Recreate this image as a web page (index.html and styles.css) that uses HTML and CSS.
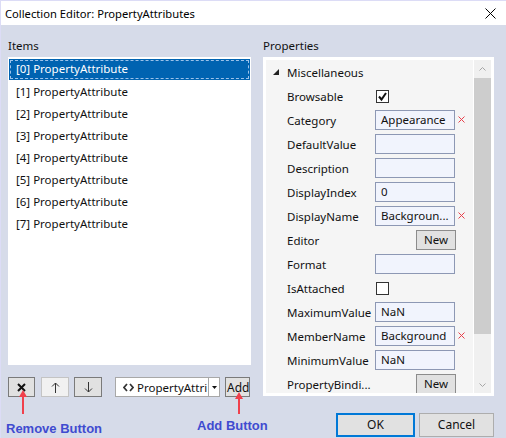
FILE: index.html
```html
<!DOCTYPE html>
<html>
<head>
<meta charset="utf-8">
<link rel="stylesheet" href="styles.css">
</head>
<body>
<div class="window">
  <div class="titlebar">
    <span class="title">Collection Editor: PropertyAttributes</span>
    <svg class="close" width="11" height="11" viewBox="0 0 11 11"><path d="M0.5 0.5 L10.5 10.5 M10.5 0.5 L0.5 10.5" stroke="#000" stroke-width="1" fill="none"/></svg>
  </div>
  <div class="main">
    <div class="col left">
      <div class="label">Items</div>
      <ul class="list">
        <li class="item selected">[0] PropertyAttribute</li>
        <li class="item">[1] PropertyAttribute</li>
        <li class="item">[2] PropertyAttribute</li>
        <li class="item">[3] PropertyAttribute</li>
        <li class="item">[4] PropertyAttribute</li>
        <li class="item">[5] PropertyAttribute</li>
        <li class="item">[6] PropertyAttribute</li>
        <li class="item">[7] PropertyAttribute</li>
      </ul>
      <div class="toolbar">
        <div class="btn tb-remove"><svg width="9" height="9" viewBox="0 0 9 9"><path d="M1 1 L8 8 M8 1 L1 8" stroke="#111" stroke-width="2" fill="none"/></svg></div>
        <div class="btn tb-up disabled"><svg width="9" height="11" viewBox="0 0 9 11"><path d="M4.5 1 L4.5 11 M1 4.5 L4.5 1 L8 4.5" stroke="#333" stroke-width="1" fill="none"/></svg></div>
        <div class="btn tb-down"><svg width="9" height="11" viewBox="0 0 9 11"><path d="M4.5 0 L4.5 10 M1 6.5 L4.5 10 L8 6.5" stroke="#333" stroke-width="1" fill="none"/></svg></div>
        <div class="combo">
          <div class="combo-value">
            <svg class="code-icon" width="11" height="9" viewBox="0 0 11 9"><path d="M4 1 L1 4.5 L4 8 M7 1 L10 4.5 L7 8" stroke="#333" stroke-width="1.7" fill="none"/></svg>
            <span class="combo-text">PropertyAttri</span>
          </div>
          <div class="combo-arrow"><svg width="5" height="3" viewBox="0 0 5 3"><path d="M0 0 L5 0 L2.5 3 Z" fill="#111"/></svg></div>
        </div>
        <div class="btn tb-add">Add</div>
      </div>
    </div>
    <div class="col right">
      <div class="label">Properties</div>
      <div class="grid">
        <div class="rows">
          <div class="row header">
            <svg class="expander" width="6" height="6" viewBox="0 0 6 6"><path d="M6 0 L6 6 L0 6 Z" fill="#222"/></svg>
            <span>Miscellaneous</span>
          </div>
          <div class="row"><span class="name">Browsable</span><span class="check checked"><svg width="11" height="11" viewBox="0 0 11 11"><path d="M2 5.5 L4.5 8.5 L9 2" stroke="#111" stroke-width="2" fill="none"/></svg></span></div>
          <div class="row"><span class="name">Category</span><span class="box">Appearance</span><svg class="err" width="7" height="7" viewBox="0 0 7 7"><path d="M0.5 0.5 L6.5 6.5 M6.5 0.5 L0.5 6.5" stroke="#e8404c" stroke-width="1" fill="none"/></svg></div>
          <div class="row"><span class="name">DefaultValue</span><span class="box"></span></div>
          <div class="row"><span class="name">Description</span><span class="box"></span></div>
          <div class="row"><span class="name">DisplayIndex</span><span class="box">0</span></div>
          <div class="row"><span class="name">DisplayName</span><span class="box">Backgroun...</span><svg class="err" width="7" height="7" viewBox="0 0 7 7"><path d="M0.5 0.5 L6.5 6.5 M6.5 0.5 L0.5 6.5" stroke="#e8404c" stroke-width="1" fill="none"/></svg></div>
          <div class="row"><span class="name">Editor</span><span class="newbtn">New</span></div>
          <div class="row"><span class="name">Format</span><span class="box"></span></div>
          <div class="row"><span class="name">IsAttached</span><span class="check"></span></div>
          <div class="row"><span class="name">MaximumValue</span><span class="box">NaN</span></div>
          <div class="row"><span class="name">MemberName</span><span class="box">Background</span><svg class="err" width="7" height="7" viewBox="0 0 7 7"><path d="M0.5 0.5 L6.5 6.5 M6.5 0.5 L0.5 6.5" stroke="#e8404c" stroke-width="1" fill="none"/></svg></div>
          <div class="row"><span class="name">MinimumValue</span><span class="box">NaN</span></div>
          <div class="row"><span class="name">PropertyBindi...</span><span class="newbtn">New</span></div>
        </div>
        <div class="scrollbar">
          <div class="sb-arrow"><svg width="7" height="4" viewBox="0 0 7 4"><path d="M0.5 3.5 L3.5 0.5 L6.5 3.5" stroke="#a6a6a6" stroke-width="1" fill="none"/></svg></div>
          <div class="sb-thumb"></div>
          <div class="sb-track"></div>
          <div class="sb-arrow"><svg width="7" height="4" viewBox="0 0 7 4"><path d="M0.5 0.5 L3.5 3.5 L6.5 0.5" stroke="#a6a6a6" stroke-width="1" fill="none"/></svg></div>
        </div>
      </div>
      <div class="dialog-buttons">
        <div class="dbtn ok">OK</div>
        <div class="dbtn cancel">Cancel</div>
      </div>
    </div>
  </div>
  <svg class="arrow arrow-remove" width="10" height="24" viewBox="0 0 10 24"><path d="M5 24 L5 5" stroke="#f0404c" stroke-width="2"/><path d="M1 7 L5 0 L9 7 Z" fill="#f0404c"/></svg>
  <svg class="arrow arrow-add" width="10" height="22" viewBox="0 0 10 22"><path d="M5 22 L5 5" stroke="#f0404c" stroke-width="2"/><path d="M1 7 L5 0 L9 7 Z" fill="#f0404c"/></svg>
  <div class="note note-remove">Remove Button</div>
  <div class="note note-add">Add Button</div>
</div>
</body>
</html>
```

FILE: styles.css
```css
* { box-sizing: border-box; }
html, body { margin: 0; padding: 0; }
body {
  font-family: "Noto Sans", "Open Sans", sans-serif;
  font-size: 11.5px;
  color: #111;
  background: #d6dbe9;
}
.window {
  position: relative;
  width: 506px;
  height: 438px;
  background: #d6dbe9;
  overflow: hidden;
  border-top: 1px solid #dcdcf6;
  border-left: 1px solid #dcdcf6;
}
.titlebar {
  height: 24px;
  background: #fff;
  display: flex;
  align-items: center;
  justify-content: space-between;
  padding: 0 10px 0 4px;
}
.title { font-size: 11.2px; color: #000; }
.close { display: block; margin-top: 0; }

.main {
  display: flex;
  gap: 12px;
  padding: 13px 12px 0 7px;
}
.col { display: flex; flex-direction: column; }
.left { width: 243px; }
.right { width: 231px; }
.label { height: 16px; line-height: 16px; margin-bottom: 3px; color: #111; }

.list {
  list-style: none;
  margin: 0;
  padding: 2px 1px;
  height: 308px;
  background: #fff;
}
.item {
  height: 22px;
  line-height: 22px;
  padding-left: 7px;
  color: #111;
}
.item.selected {
  background: #0063b1;
  color: #fff;
  height: 21px;
  line-height: 20px;
  margin-bottom: 1px;
  outline: 1px dashed #9cc2ea;
  outline-offset: -2px;
}

.toolbar {
  margin-top: 12px;
  height: 20px;
  display: flex;
  align-items: stretch;
}
.btn {
  background: #e1e1e1;
  border: 1px solid #7a7a7a;
  display: flex;
  align-items: center;
  justify-content: center;
}
.btn svg { display: block; }
.tb-remove { width: 27px; }
.tb-up { width: 28px; margin-left: 6px; background: #f1f1f1; border-color: #c4c4c4; }
.tb-down { width: 28px; margin-left: 5px; }
.combo {
  width: 105px;
  margin-left: 13px;
  background: #fff;
  border: 1px solid #a8a8a8;
  display: flex;
}
.combo-value {
  flex: 1;
  display: flex;
  align-items: center;
  padding-left: 7px;
  overflow: hidden;
  white-space: nowrap;
}
.code-icon { display: block; margin-right: 3px; flex: none; }
.combo-text { overflow: hidden; }
.combo-arrow {
  width: 11px;
  border-left: 1px solid #a8a8a8;
  display: flex;
  align-items: center;
  justify-content: center;
}
.combo-arrow svg { display: block; }
.tb-add {
  width: 25px;
  margin-left: 5px;
  padding: 0;
  overflow: hidden;
  white-space: nowrap;
  font-size: 12px;
  justify-content: flex-start;
  padding-left: 1px;
}

.grid {
  height: 339px;
  border: 3px solid #fff;
  background: #fff;
  display: flex;
  gap: 1px;
}
.rows {
  flex: 1;
  background: #f5f5f5;
  overflow: hidden;
}
.row {
  height: 24px;
  display: flex;
  align-items: center;
  padding-left: 21px;
  white-space: nowrap;
}
.row.header { padding-left: 7px; }
.expander { display: block; margin-right: 8px; }
.name { width: 88px; flex: none; color: #111; }
.box {
  width: 80px;
  height: 20px;
  line-height: 18px;
  border: 1px solid #8d98b4;
  background: #f1f4fd;
  padding: 0 5px;
  overflow: hidden;
  color: #111;
  margin-top: -1px;
}
.err {
  display: block;
  margin-left: 3px;
  margin-top: -2px;
}
.check {
  width: 13px;
  height: 13px;
  border: 1px solid #333;
  background: #fff;
  margin-left: 1px;
  display: flex;
  align-items: center;
  justify-content: center;
}
.check svg { display: block; }
.newbtn {
  margin-left: 41px;
  width: 40px;
  height: 20px;
  line-height: 18px;
  text-align: center;
  background: #e1e1e1;
  border: 1px solid #8c8c8c;
  color: #111;
  margin-top: -1px;
}
.scrollbar {
  width: 17px;
  background: #f0f0f0;
  display: flex;
  flex-direction: column;
}
.sb-arrow {
  height: 17px;
  display: flex;
  align-items: center;
  justify-content: center;
  flex: none;
}
.sb-arrow svg { display: block; }
.sb-thumb { height: 256px; background: #cdcdcd; flex: none; margin-top: 1px; }
.sb-track { flex: 1; }

.dialog-buttons {
  margin-top: 17px;
  display: flex;
  justify-content: flex-end;
  gap: 4px;
}
.dbtn {
  height: 24px;
  line-height: 21px;
  text-align: center;
  background: #e1e1e1;
  border: 1px solid #adadad;
  font-size: 12px;
  color: #111;
}
.ok { width: 79px; border: 2px solid #0078d7; line-height: 20px; }
.cancel { width: 75px; }

.arrow { position: absolute; display: block; }
.arrow-remove { left: 17px; top: 389px; }
.arrow-add { left: 233px; top: 391px; }
.note {
  position: absolute;
  font-family: "Liberation Sans", Arial, sans-serif;
  font-weight: bold;
  font-size: 13px;
  color: #3f4bd0;
  white-space: nowrap;
}
.note-remove { left: 5px; top: 420px; }
.note-add { left: 196px; top: 417px; }
```
